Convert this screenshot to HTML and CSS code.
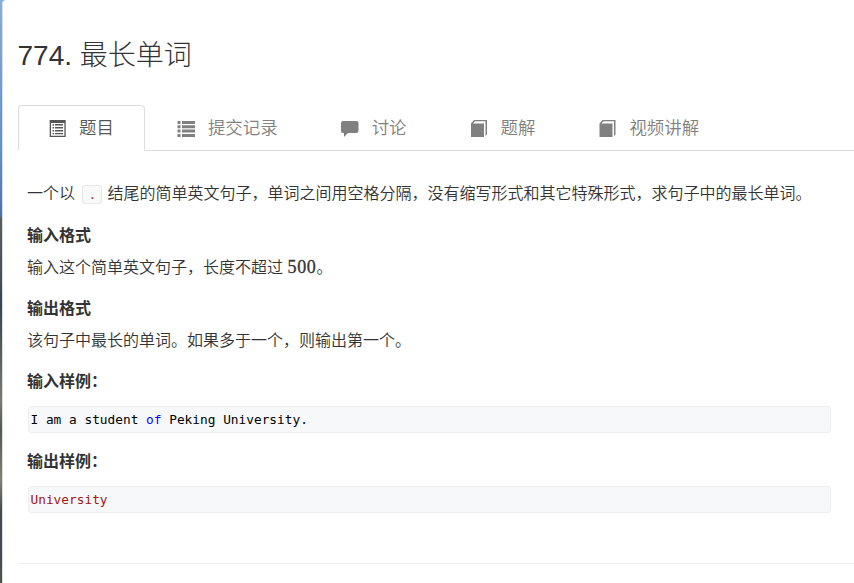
FILE: index.html
```html
<!DOCTYPE html>
<html lang="zh-CN">
<head>
    <meta charset="UTF-8">
    <meta name="viewport" content="width=device-width, initial-scale=1.0">
    <title>774. 最长单词</title>
    <link rel="stylesheet" href="styles.css">
</head>
<body>
    <div class="panel">
        <h1 class="problem-title">774. 最长单词</h1>

        <!-- Tabs -->
        <ul class="nav-tabs">
            <li class="active">
                <a href="#">
                    <svg class="icon" viewBox="0 0 17 17" fill="currentColor">
                        <path fill-rule="evenodd" d="M.7 0h16v17h-16zM2 3v12.800h13.400V3z"/>
                        <path d="M3.500 4h1.500v1.500H3.500zM6 4h8v1.500H6zM3.500 7h1.500v1.500H3.500zM6 7h8v1.500H6zM3.500 10h1.500v1.500H3.500zM6 10h8v1.500H6zM3.500 13h1.500v1.200H3.500zM6 13h8v1.200H6z"/>
                    </svg>
                    <span>题目</span>
                </a>
            </li>
            <li>
                <a href="#">
                    <svg class="icon" viewBox="0 0 17 17" fill="currentColor">
                        <path d="M-.5 1h3v3h-3zM4 1h13v3H4zM-.5 5.300h3v3h-3zM4 5.300h13v3H4zM-.5 9.600h3v3h-3zM4 9.600h13v3H4zM-.5 14h3v3h-3zM4 14h13v3H4z"/>
                    </svg>
                    <span>提交记录</span>
                </a>
            </li>
            <li>
                <a href="#">
                    <svg class="icon" viewBox="0 0 17 17" fill="currentColor">
                        <path d="M1 1h13.500Q16.500 1 16.500 3v8q0 2-2 2H6l-4 4v-4H1q-2 0-2-2V3q0-2 2-2z"/>
                    </svg>
                    <span>讨论</span>
                </a>
            </li>
            <li>
                <a href="#">
                    <svg class="icon" viewBox="0 0 17 17" fill="currentColor">
                        <path d="M0 3.500L3 0h13v14.500L14.500 16V1.300H4L2 3.500h11V17H0z"/>
                    </svg>
                    <span>题解</span>
                </a>
            </li>
            <li>
                <a href="#">
                    <svg class="icon" viewBox="0 0 17 17" fill="currentColor">
                        <path d="M.5 3.500L3.500 0h13v14.500L15 16V1.300H4.500L2.500 3.500h11V17H.5z"/>
                    </svg>
                    <span>视频讲解</span>
                </a>
            </li>
        </ul>

        <!-- Problem statement -->
        <div class="content">
            <p>一个以 <code>.</code> 结尾的简单英文句子，单词之间用空格分隔，没有缩写形式和其它特殊形式，求句子中的最长单词。</p>
            <h4>输入格式</h4>
            <p>输入这个简单英文句子，长度不超过 <span class="math">500</span>。</p>
            <h4>输出格式</h4>
            <p>该句子中最长的单词。如果多于一个，则输出第一个。</p>
            <h4>输入样例：</h4>
            <pre>I am a student <span class="keyword">of</span> Peking University.</pre>
            <h4>输出样例：</h4>
            <pre class="output">University</pre>
        </div>
        <hr>
    </div>
</body>
</html>
```
FILE: styles.css
```css
* {
    box-sizing: border-box;
}

body {
    margin: 0;
    height: 583px;
    overflow: hidden;
    padding-left: 2px;
    font-family: "Liberation Sans", "Noto Sans CJK SC", sans-serif;
    font-size: 16px;
    color: #333;
    background: linear-gradient(#80b0dc 0, #5d91d0 150px, #4874b4 215px, #555e5d 219px, #465158 280px, #30445b 300px, #4c5856 340px, #777c72 400px, #525a51 430px, #7f8172 480px, #424c4a 510px, #41495a 545px, #4c5547 583px);
}

.panel {
    height: 583px;
    padding: 36px 0 0 15px;
    border-left: 1px solid #ddd;
    border-top-left-radius: 4px;
    background-color: #fff;
}

.problem-title {
    margin: 0 0 29px -0.5px;
    font-size: 28px;
    font-weight: 300;
    line-height: 40px;
}

/* Tabs */
.nav-tabs {
    display: flex;
    gap: 2px;
    height: 46px;
    margin: 0;
    padding: 0;
    list-style: none;
    border-bottom: 1px solid #ddd;
}

.nav-tabs a {
    display: flex;
    align-items: center;
    gap: 13px;
    height: 46px;
    padding: 0 30px;
    border: 1px solid transparent;
    border-radius: 4px 4px 0 0;
    color: #808080;
    font-size: 17.45px;
    font-weight: 350;
    line-height: 24px;
    text-decoration: none;
    white-space: nowrap;
}

.nav-tabs .active a {
    color: #555;
    background-color: #fff;
    border-color: #ddd;
    border-bottom-color: #fff;
}

.icon {
    width: 17px;
    height: 17px;
    flex: none;
    overflow: visible;
}

/* Problem statement */
.content {
    width: 804px;
    margin: 29px 0 0 9px;
}

.content p {
    margin: 0 0 10px;
    font-weight: 350;
    line-height: 27px;
    white-space: nowrap;
}

.content h4 {
    margin: 0 0 3px;
    padding: 2px 0 0;
    font-size: 16px;
    font-weight: 700;
    line-height: 31px;
}

code {
    padding: 1px 5px;
    margin: 0 1px 0 3px;
    border: 1px solid #e8e8e8;
    border-radius: 3px;
    background-color: #f9f9f9;
    color: #c7254e;
    font-family: "DejaVu Sans Mono", monospace;
    font-size: 12.8px;
}

.math {
    font-family: "Liberation Serif", serif;
    font-size: 18px;
    font-weight: 400;
    letter-spacing: 0.7px;
    line-height: 1;
    -webkit-text-stroke: 0.3px #333;
}

.content pre {
    height: 27px;
    margin: 9px 0 11px 1px;
    padding: 0 1.5px;
    border: 1px solid #eee;
    border-radius: 3px;
    background-color: #f6f8fa;
    color: #000;
    font-family: "DejaVu Sans Mono", monospace;
    font-size: 12.8px;
    line-height: 25px;
}

.keyword {
    color: #00f;
}

.content .output {
    color: #a31515;
}

hr {
    margin: 50px 0 0;
    border: 0;
    border-top: 1px solid #eee;
}
```
